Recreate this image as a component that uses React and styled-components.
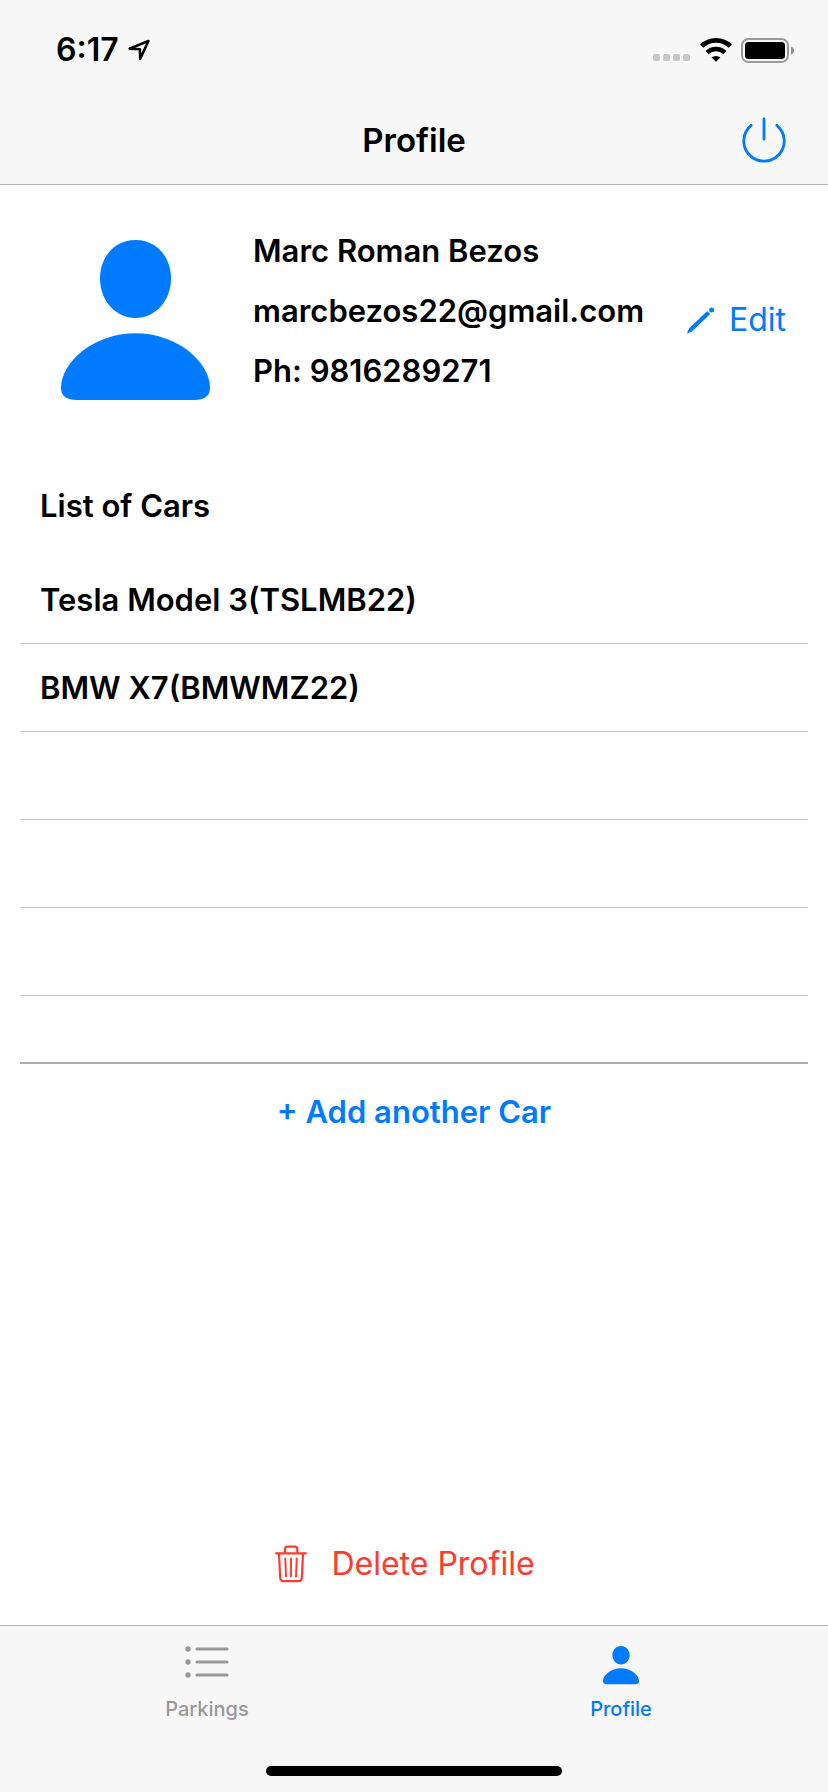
import React from "react";
import styled, { createGlobalStyle } from "styled-components";

const BLUE = "#007aff";
const RED = "#ff3b30";
const GRAY = "#999999";

const GlobalStyle = createGlobalStyle`
  *, *::before, *::after { box-sizing: border-box; }
  body {
    margin: 0;
    background: #ffffff;
    color: #000000;
    font-family: Inter, "Liberation Sans", sans-serif;
  }
`;

const Screen = styled.div`
  display: flex;
  flex-direction: column;
  min-height: 100vh;
`;

const Header = styled.header`
  background: #f7f7f7;
  border-bottom: 1px solid #b2b2b2;
`;

const StatusBar = styled.div`
  display: flex;
  align-items: center;
  justify-content: space-between;
  height: 96px;
  padding: 4px 34px 0 56px;
`;

const StatusGroup = styled.div`
  display: flex;
  align-items: center;
  gap: ${(p) => p.$gap}px;
`;

const Clock = styled.time`
  font-size: 32px;
  line-height: 40px;
  font-weight: 600;
`;

const NavBar = styled.div`
  display: grid;
  grid-template-columns: 1fr auto 1fr;
  align-items: center;
  height: 88px;
  padding: 0 42px;
`;

const Title = styled.h1`
  grid-column: 2;
  margin: 0;
  font-size: 33px;
  line-height: 40px;
  font-weight: 600;
`;

const PlainButton = styled.button`
  display: inline-flex;
  align-items: center;
  gap: ${(p) => p.$gap || 0}px;
  padding: 0;
  border: 0;
  background: none;
  font-family: inherit;
  font-size: ${(p) => p.$size || 32}px;
  line-height: 40px;
  font-weight: ${(p) => p.$weight || 400};
  color: ${(p) => p.$color || BLUE};
  cursor: pointer;
`;

const PowerButton = styled(PlainButton)`
  grid-column: 3;
  justify-self: end;
`;

const Main = styled.main`
  flex: 1;
  display: flex;
  flex-direction: column;
  padding: 36px 20px 0;
`;

const ProfileCard = styled.section`
  display: flex;
  align-items: center;
  padding: 0 22px 0 41px;
`;

const Details = styled.div`
  flex: 1;
  margin-left: 42px;
  padding-bottom: 18px;
`;

const Detail = styled.p`
  margin: 0;
  font-size: 31px;
  line-height: 60px;
  font-weight: 600;
  white-space: nowrap;
`;

const CarsHeading = styled.h2`
  margin: 67px 20px 30px;
  font-size: 31px;
  line-height: 40px;
  font-weight: 600;
`;

const CarList = styled.ul`
  margin: 0;
  padding: 0;
  list-style: none;
  border-bottom: 2px solid #aeaeb2;
`;

const CarRow = styled.li`
  display: flex;
  align-items: center;
  height: 88px;
  padding: 0 20px;
  border-bottom: 1px solid #c8c7cc;
  font-size: 31px;
  line-height: 40px;
  font-weight: 600;

  &:last-child {
    height: 66px;
    border-bottom: 0;
  }
`;

const AddButton = styled(PlainButton)`
  align-self: center;
  margin-top: 28px;
`;

const DeleteButton = styled(PlainButton)`
  align-self: center;
  margin: auto 18px 41px 0;
`;

const Footer = styled.footer`
  display: flex;
  flex-direction: column;
  align-items: center;
  background: #f7f7f7;
  border-top: 1px solid #b2b2b2;
  padding-bottom: 16px;
`;

const TabBar = styled.nav`
  display: grid;
  grid-template-columns: 1fr 1fr;
  width: 100%;
  height: 140px;
  padding-top: 20px;
`;

const Tab = styled.a`
  display: flex;
  flex-direction: column;
  align-items: center;
  gap: 12px;
  font-size: 20px;
  line-height: 24px;
  font-weight: 500;
  text-decoration: none;
  color: ${(p) => (p.$active ? BLUE : GRAY)};
`;

const HomeIndicator = styled.div`
  width: 296px;
  height: 10px;
  border-radius: 5px;
  background: #000000;
`;

const LocationIcon = () => (
  <svg width="22" height="22" viewBox="0 0 22 22" fill="none" stroke="#000" strokeWidth="2.6" strokeLinejoin="round" aria-hidden="true">
    <path d="M1.600 9.600 20.400 2 12.200 19.800 11.900 10.200Z" />
  </svg>
);

const SignalIcon = () => (
  <svg width="38" height="24" viewBox="0 0 38 24" fill="#c7c7c7" aria-hidden="true">
    {[0, 10, 20, 30].map((x) => (
      <rect key={x} x={x} y="16" width="7" height="7" rx="2" />
    ))}
  </svg>
);

const WifiIcon = () => (
  <svg width="32" height="24" viewBox="0 0 32 24" fill="none" stroke="#000" strokeWidth="4.6" aria-hidden="true">
    <path d="M1.6 8.2a20.6 20.6 0 0 1 28.8 0" />
    <path d="M7 14.6a13 13 0 0 1 18 0" />
    <path d="M16 23.8 11.6 19.6a6.6 6.6 0 0 1 8.8 0Z" fill="#000" stroke="none" />
  </svg>
);

const BatteryIcon = () => (
  <svg width="53" height="25" viewBox="0 0 53 25" aria-hidden="true">
    <rect x="1" y="1" width="46" height="23" rx="6.5" fill="none" stroke="#999" strokeWidth="2" />
    <rect x="4" y="4" width="40" height="17" rx="3.5" fill="#000" />
    <path d="M50 8.5c4 1.4 4 6.6 0 8Z" fill="#8c8c8c" />
  </svg>
);

const PowerIcon = () => (
  <svg width="44" height="46" viewBox="0 0 44 46" fill="none" stroke="currentColor" strokeWidth="2.8" strokeLinecap="round" aria-hidden="true">
    <path d="M22 2V22" />
    <path d="M9.200 8.300A20.200 20.200 0 1 0 34.800 8.300" />
  </svg>
);

const AvatarIcon = () => (
  <svg width="150" height="160" viewBox="0 0 150 160" fill={BLUE} aria-hidden="true">
    <path d="M74.5 0C95 0 110 16.500 110 38.500C110 60.500 94.500 78 74.500 78S39 60.500 39 38.500C39 16.500 54 0 74.500 0Z" />
    <path d="M74.500 93.300C116 93.300 149 122 149 148C149 156 143.500 160 133 160H16C5.500 160 0 156 0 148C0 122 33 93.300 74.500 93.300Z" />
  </svg>
);

const PersonIcon = () => (
  <svg width="36" height="39" viewBox="0 0 36 39" fill="currentColor" aria-hidden="true">
    <path d="M18 0C23 0 26.600 4 26.600 9C26.600 14.300 22.900 18.400 18 18.400S9.400 14.300 9.400 9C9.400 4 13 0 18 0Z" />
    <path d="M18 22.200C28 22.200 36 29 36 35.200C36 37.200 34.700 38.200 32.200 38.200H3.800C1.300 38.200 0 37.200 0 35.200C0 29 8 22.200 18 22.200Z" />
  </svg>
);

const PencilIcon = () => (
  <svg width="28" height="27" viewBox="0 0 28 27" fill="currentColor" aria-hidden="true">
    <path d="M20.200 3.900 23.200 6.900 5 24.500 0.800 26.200Q0 26.400 0.200 25.600L2 21.500Z" />
    <circle cx="24.600" cy="2.900" r="2.500" />
  </svg>
);

const TrashIcon = () => (
  <svg width="32" height="38" viewBox="0 0 32 38" fill="none" stroke="currentColor" strokeWidth="2.200" strokeLinecap="round" strokeLinejoin="round" aria-hidden="true">
    <path d="M1.100 8.300H30.900" />
    <path d="M10 8V4.200Q10 1.700 12.500 1.700H19.800Q22.300 1.700 22.300 4.200V8" />
    <path d="M4 9 5.200 32.700Q5.400 36.100 8.500 36.100H23.500Q26.600 36.100 26.800 32.700L28 9" />
    <path d="M10.300 13.500 11 31.500M16 13.500V31.500M21.700 13.500 21 31.500" strokeWidth="1.900" />
  </svg>
);

const ListIcon = () => (
  <svg width="44" height="39" viewBox="0 0 44 39" fill="currentColor" aria-hidden="true">
    {[3, 16, 29].map((y) => (
      <g key={y} transform={`translate(0 ${y})`}>
        <circle cx="3" cy="0" r="2.700" />
        <rect x="10.500" y="-1.500" width="33" height="3" rx="1.500" />
      </g>
    ))}
  </svg>
);

const CARS = ["Tesla Model 3(TSLMB22)", "BMW X7(BMWMZ22)", "", "", "", ""];

export default function App() {
  return (
    <Screen>
      <GlobalStyle />
      <Header>
        <StatusBar>
          <StatusGroup $gap={9}>
            <Clock>6:17</Clock>
            <LocationIcon />
          </StatusGroup>
          <StatusGroup $gap={9}>
            <SignalIcon />
            <WifiIcon />
            <BatteryIcon />
          </StatusGroup>
        </StatusBar>
        <NavBar>
          <Title>Profile</Title>
          <PowerButton type="button" aria-label="Log out">
            <PowerIcon />
          </PowerButton>
        </NavBar>
      </Header>

      <Main>
        <ProfileCard>
          <AvatarIcon />
          <Details>
            <Detail>Marc Roman Bezos</Detail>
            <Detail>marcbezos22@gmail.com</Detail>
            <Detail>Ph: 9816289271</Detail>
          </Details>
          <PlainButton type="button" $gap={14}>
            <PencilIcon />
            Edit
          </PlainButton>
        </ProfileCard>

        <CarsHeading>List of Cars</CarsHeading>
        <CarList>
          {CARS.map((car, i) => (
            <CarRow key={i}>{car}</CarRow>
          ))}
        </CarList>
        <AddButton type="button" $size={31} $weight={600}>
          + Add another Car
        </AddButton>

        <DeleteButton type="button" $color={RED} $gap={24}>
          <TrashIcon />
          Delete Profile
        </DeleteButton>
      </Main>

      <Footer>
        <TabBar>
          <Tab href="#parkings">
            <ListIcon />
            Parkings
          </Tab>
          <Tab href="#profile" $active aria-current="page">
            <PersonIcon />
            Profile
          </Tab>
        </TabBar>
        <HomeIndicator />
      </Footer>
    </Screen>
  );
}
